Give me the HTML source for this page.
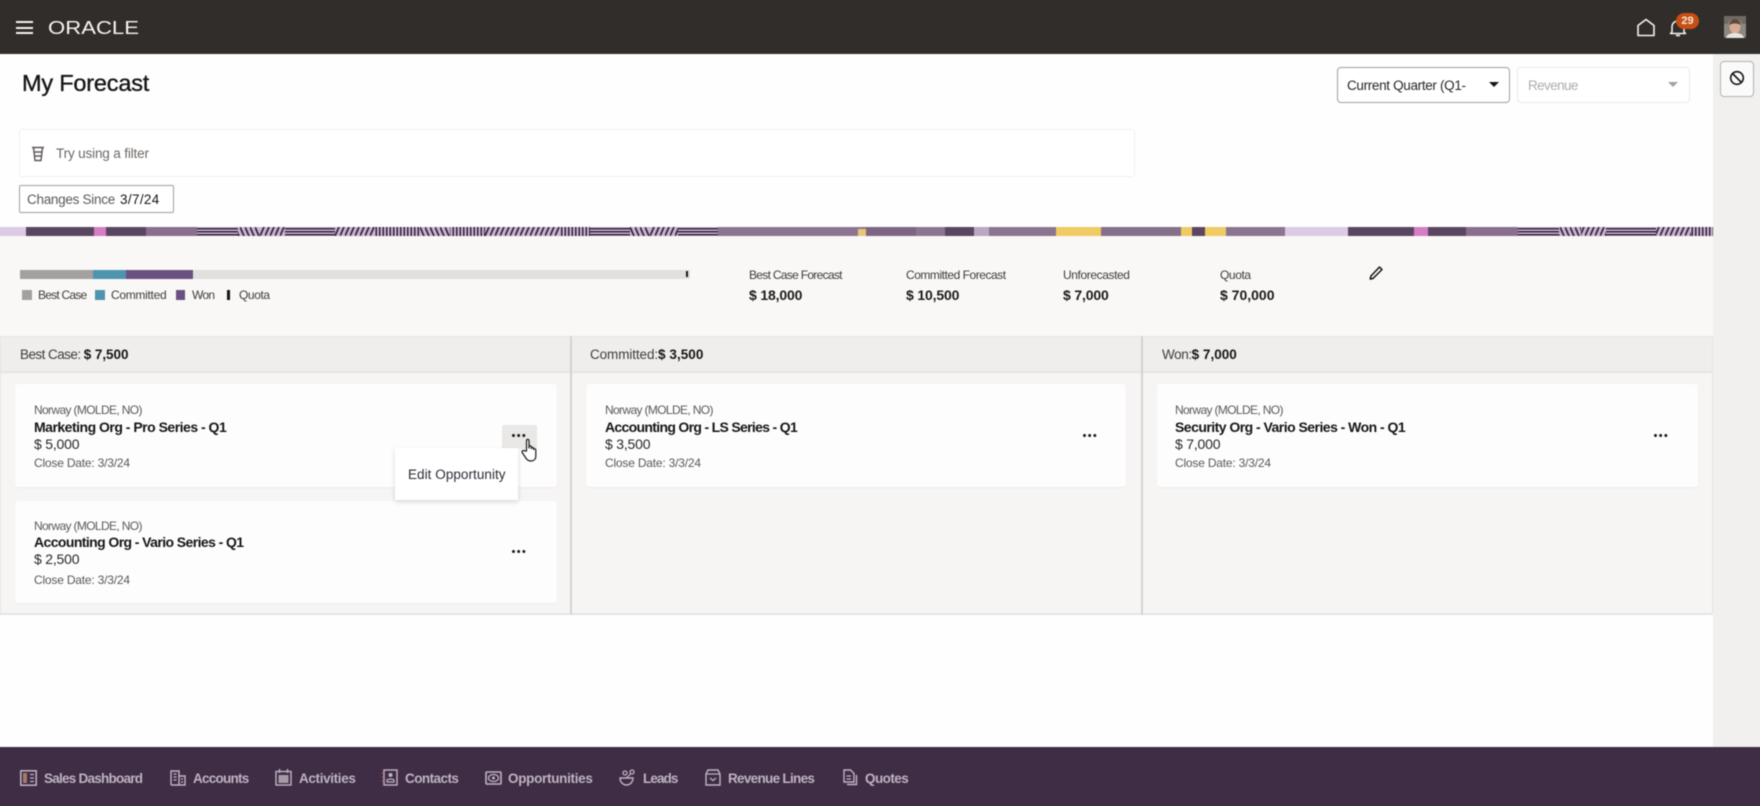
<!DOCTYPE html>
<html lang="en"><head><meta charset="utf-8"><title>My Forecast</title>
<style>
*{box-sizing:border-box}
html,body{margin:0;padding:0;width:1760px;height:806px;overflow:hidden;background:#fefefe}
body{font-family:"Liberation Sans",sans-serif;color:#1c1a19;position:relative}
#root{position:absolute;left:0;top:0;width:1760px;height:806px;overflow:visible;filter:blur(.45px)}
.a{position:absolute}
.t{position:absolute;white-space:nowrap;line-height:20px;height:20px}
.card{position:absolute;background:#fdfdfd;border-radius:3px;box-shadow:0 1px 2px rgba(0,0,0,.04)}
.s{font-size:12px;color:#5c5856;letter-spacing:-.64px}
.c{font-size:12px;color:#5c5856;letter-spacing:-.2px}
.b{font-size:14px;font-weight:bold;color:#161513}
.m{font-size:14px;color:#2a2725;letter-spacing:-.2px}
.l{font-size:12px;color:#3f3c3a;letter-spacing:-.4px}
.v{font-size:14px;font-weight:bold;color:#1c1a19;letter-spacing:-.15px}
.h{font-size:13.5px;color:#3f3c3a;letter-spacing:-.4px}
.h b{color:#161513;letter-spacing:-.1px}
.f{font-size:13.5px;color:#bfb4c3;font-weight:bold}
.dots{position:absolute;width:14px;height:3px;background:radial-gradient(circle at 1.5px 1.5px,#1c1a19 1.4px,transparent 1.6px) 0 0/5.2px 3px repeat-x}
svg{position:absolute;display:block;overflow:visible}
</style></head><body><div id="root">

<!-- page background extended past the edges so the blur does not soften them -->
<div class="a" style="left:-10px;top:-10px;width:1780px;height:826px;background:#fefefe"></div>

<!-- header -->
<div class="a" style="left:-10px;top:-10px;width:1780px;height:64px;background:#312d2a"></div>
<div class="a" style="left:16px;top:21px;width:17px;height:2px;background:#f5f4f2"></div>
<div class="a" style="left:16px;top:27px;width:17px;height:2px;background:#f5f4f2"></div>
<div class="a" style="left:16px;top:32px;width:17px;height:2px;background:#f5f4f2"></div>
<svg style="left:48px;top:20px" width="92" height="16" viewBox="0 0 92 16"><text x="0" y="14" font-family="Liberation Sans" font-size="18" fill="#f7f6f4" textLength="91" lengthAdjust="spacingAndGlyphs">ORACLE</text></svg>
<svg style="left:1636px;top:18px" width="20" height="19" viewBox="0 0 20 19"><path d="M2 17.500V7.500L10 1.500L18 7.500V17.500Z" fill="none" stroke="#f5f4f2" stroke-width="1.600" stroke-linejoin="round"/></svg>
<svg style="left:1669px;top:18px" width="18" height="20" viewBox="0 0 18 20"><path d="M3 14V9C3 5.500 5.500 3 9 3C12.500 3 15 5.500 15 9V14L16.500 15.500H1.500Z" fill="none" stroke="#f5f4f2" stroke-width="1.500" stroke-linejoin="round"/><path d="M7 17.500H11" stroke="#f5f4f2" stroke-width="1.600"/></svg>
<div class="a" style="left:1676px;top:13px;width:23px;height:16px;border-radius:8px;background:#c74e14"></div>
<div class="t" style="left:1676px;top:11px;width:23px;text-align:center;font-size:11px;color:#f7e8dc;font-weight:bold">29</div>
<svg style="left:1724px;top:16px" width="22" height="22" viewBox="0 0 22 22"><rect width="22" height="22" rx="2" fill="#8d8781"/><path d="M0 0H22V8H18C17 4 14 3 11 3C8 3 5 4 4 8H0Z" fill="#6f6a65"/><ellipse cx="11" cy="10.500" rx="5.500" ry="7" fill="#d8ac94"/><path d="M5.500 9C5.500 5 8 3 11 3C14 3 16.500 5 16.500 9C14 7 8 7 5.500 9Z" fill="#5f4a3d"/><path d="M2 22C3 18 7 17 11 17C15 17 19 18 20 22Z" fill="#e8e4de"/></svg>

<!-- page -->
<div class="a" style="left:1713px;top:54px;width:57px;height:693px;background:#f1f0ef"></div>
<div class="t" style="left:22px;top:71px;font-size:23.500px;line-height:24px;height:24px;color:#161513;letter-spacing:-.2px;-webkit-text-stroke:.35px #161513">My Forecast</div>

<div class="a" style="left:1337px;top:67px;width:173px;height:36px;background:#fff;border:1.500px solid #a3a09c;border-radius:4px"></div>
<div class="t" style="left:1347px;top:76px;font-size:13.500px;color:#2a2725;letter-spacing:-.33px">Current Quarter (Q1-</div>
<div class="a" style="left:1489px;top:82px;border:5px solid transparent;border-top:5px solid #161513;border-bottom:0"></div>
<div class="a" style="left:1517px;top:67px;width:173px;height:36px;background:#fff;border:1.500px solid #eceae8;border-radius:4px"></div>
<div class="t" style="left:1528px;top:76px;font-size:13.500px;color:#b1adaa;letter-spacing:-.6px">Revenue</div>
<div class="a" style="left:1668px;top:82px;border:5px solid transparent;border-top:5px solid #a5a19e;border-bottom:0"></div>

<div class="a" style="left:1720px;top:61px;width:34px;height:36px;background:#fafafa;border:1.500px solid #b5b2af;border-radius:4px"></div>
<svg style="left:1729px;top:70px" width="16" height="16" viewBox="0 0 16 16"><circle cx="8" cy="8" r="6.300" fill="none" stroke="#161513" stroke-width="1.600"/><path d="M3.500 3.500L12.500 12.500" stroke="#161513" stroke-width="1.600"/></svg>

<div class="a" style="left:19px;top:129px;width:1116px;height:48px;background:#fff;border:1px solid #f1f0ef;border-radius:3px"></div>
<svg style="left:30px;top:146px" width="16" height="16" viewBox="0 0 16 16"><path d="M2 1.500H14M3.500 1.500L5 14.500H11L12.500 1.500M4 6H12M4.500 10H11.500" fill="none" stroke="#5c5856" stroke-width="1.400"/></svg>
<div class="t" style="left:56px;top:144px;font-size:13.500px;color:#6b6764;letter-spacing:-.15px">Try using a filter</div>

<div class="a" style="left:19px;top:185px;width:155px;height:28px;background:#fff;border:1.500px solid #a3a09c;border-radius:2px"></div>
<div class="t" style="left:27px;top:190px;font-size:13.500px;color:#5c5856;letter-spacing:-.28px">Changes Since</div>
<div class="t" style="left:120px;top:190px;font-size:13.500px;color:#161513;letter-spacing:.35px">3/7/24</div>

<!-- banner -->
<svg style="left:0;top:227px" width="1713" height="9" viewBox="0 0 1713 9" shape-rendering="crispEdges">
<defs>
<pattern id="pd" width="5" height="9" patternUnits="userSpaceOnUse"><rect width="5" height="9" fill="#c9b4d2"/><path d="M0 9L4 0" stroke="#33233e" stroke-width="1.700" shape-rendering="auto"/></pattern>
<pattern id="pb" width="5" height="9" patternUnits="userSpaceOnUse"><rect width="5" height="9" fill="#c9b4d2"/><path d="M0 0L4 9" stroke="#33233e" stroke-width="1.700" shape-rendering="auto"/></pattern>
<pattern id="pv" width="3.500" height="9" patternUnits="userSpaceOnUse"><rect width="3.500" height="9" fill="#c9b4d2"/><rect x="1" width="1.500" height="9" fill="#33233e"/></pattern>
<pattern id="ph" width="8" height="3" patternUnits="userSpaceOnUse"><rect width="8" height="3" fill="#c9b4d2"/><rect y="1" width="8" height="1.300" fill="#33233e"/></pattern>
</defs>
<rect x="-10" width="1723" height="9" fill="#dccbe4"/>
<rect x="26" width="68" height="9" fill="#5b4661"/><rect x="94" width="12" height="9" fill="#d47cc4"/><rect x="106" width="40" height="9" fill="#5b4661"/><rect x="146" width="51" height="9" fill="#8a6e90"/>
<rect x="197" width="41" height="9" fill="url(#ph)"/><rect x="238" width="22" height="9" fill="url(#pb)"/><rect x="260" width="25" height="9" fill="url(#pd)"/><rect x="285" width="50" height="9" fill="url(#ph)"/><rect x="335" width="40" height="9" fill="url(#pd)"/><rect x="375" width="45" height="9" fill="url(#pv)"/><rect x="420" width="30" height="9" fill="url(#pb)"/><rect x="450" width="35" height="9" fill="url(#pv)"/><rect x="485" width="75" height="9" fill="url(#pd)"/><rect x="560" width="30" height="9" fill="url(#pv)"/><rect x="590" width="40" height="9" fill="url(#ph)"/><rect x="630" width="20" height="9" fill="url(#pb)"/><rect x="650" width="28" height="9" fill="url(#pd)"/><rect x="678" width="40" height="9" fill="url(#ph)"/>
<rect x="718" width="227" height="9" fill="#8b7591"/><rect x="858" y="2" width="8" height="7" fill="#e8c777"/><rect x="866" width="50" height="9" fill="#7e6585"/><rect x="945" width="29" height="9" fill="#5b4661"/><rect x="974" width="15" height="9" fill="#bba6c4"/><rect x="989" width="67" height="9" fill="#8b7591"/><rect x="1056" width="45" height="9" fill="#f0ca63"/><rect x="1101" width="80" height="9" fill="#85708c"/><rect x="1181" width="11" height="9" fill="#f0ca63"/><rect x="1192" width="13" height="9" fill="#5b4661"/><rect x="1205" width="21" height="9" fill="#f0ca63"/><rect x="1226" width="59" height="9" fill="#8b7591"/><rect x="1285" width="63" height="9" fill="#dccbe4"/><rect x="1348" width="66" height="9" fill="#5b4661"/><rect x="1414" width="14" height="9" fill="#d47cc4"/><rect x="1428" width="38" height="9" fill="#5b4661"/><rect x="1466" width="52" height="9" fill="#8a6e90"/>
<rect x="1518" width="41" height="9" fill="url(#ph)"/><rect x="1559" width="22" height="9" fill="url(#pb)"/><rect x="1581" width="25" height="9" fill="url(#pd)"/><rect x="1606" width="50" height="9" fill="url(#ph)"/><rect x="1656" width="35" height="9" fill="url(#pd)"/><rect x="1691" width="22" height="9" fill="url(#pv)"/>
</svg>

<!-- summary -->
<div class="a" style="left:-10px;top:236px;width:1723px;height:100px;background:#f9f8f6"></div>
<div class="a" style="left:20px;top:270px;width:670px;height:9px;background:#e1e0de;border-radius:1px"></div>
<div class="a" style="left:20px;top:270px;width:73px;height:9px;background:#a3a09d"></div>
<div class="a" style="left:93px;top:270px;width:33px;height:9px;background:#4f94ae"></div>
<div class="a" style="left:126px;top:270px;width:67px;height:9px;background:#6b5180"></div>
<div class="a" style="left:686px;top:271px;width:2px;height:6px;background:#161513"></div>
<div class="a" style="left:22px;top:290px;width:10px;height:10px;background:#a3a09d"></div>
<div class="t l" style="left:38px;top:285px;letter-spacing:-.78px">Best Case</div>
<div class="a" style="left:95px;top:290px;width:10px;height:10px;background:#4f94ae"></div>
<div class="t l" style="left:111px;top:285px;letter-spacing:-.3px">Committed</div>
<div class="a" style="left:176px;top:290px;width:9px;height:10px;background:#6b5180"></div>
<div class="t l" style="left:192px;top:285px;letter-spacing:-.7px">Won</div>
<div class="a" style="left:227px;top:290px;width:3px;height:10px;background:#161513"></div>
<div class="t l" style="left:239px;top:285px">Quota</div>

<div class="t l" style="left:749px;top:265px;letter-spacing:-.7px">Best Case Forecast</div><div class="t v" style="left:749px;top:285px">$ 18,000</div>
<div class="t l" style="left:906px;top:265px;letter-spacing:-.47px">Committed Forecast</div><div class="t v" style="left:906px;top:285px">$ 10,500</div>
<div class="t l" style="left:1063px;top:265px">Unforecasted</div><div class="t v" style="left:1063px;top:285px">$ 7,000</div>
<div class="t l" style="left:1220px;top:265px">Quota</div><div class="t v" style="left:1220px;top:285px;letter-spacing:0">$ 70,000</div>
<svg style="left:1368px;top:265px" width="16" height="16" viewBox="0 0 16 16"><path d="M3 11L11.500 2L14 4.500L5 13.500L2.200 14Z" fill="none" stroke="#161513" stroke-width="1.500" stroke-linejoin="round"/></svg>

<!-- board -->
<div class="a" style="left:-10px;top:336px;width:1723px;height:279px;background:#f6f5f4;border:1px solid #e6e5e3;border-width:1px 1px 2px 1px"></div>
<div class="a" style="left:-10px;top:336px;width:1723px;height:37px;background:#efeeec;border:1px solid #e6e5e3;border-width:1px 1px 2px 1px"></div>
<div class="a" style="left:0;top:337px;width:1px;height:277px;background:#e6e5e3"></div>
<div class="a" style="left:570px;top:336px;width:2px;height:279px;background:#d5d3d1"></div>
<div class="a" style="left:1141px;top:336px;width:2px;height:279px;background:#d5d3d1"></div>
<div class="t h" style="left:20px;top:345px;letter-spacing:-.55px">Best Case: <b style="letter-spacing:-.05px">$ 7,500</b></div>
<div class="t h" style="left:590px;top:345px;letter-spacing:-.1px">Committed:<b style="letter-spacing:.05px">$ 3,500</b></div>
<div class="t h" style="left:1162px;top:345px">Won:<b style="letter-spacing:0">$ 7,000</b></div>

<div class="card" style="left:15px;top:384px;width:542px;height:103px"></div>
<div class="t s" style="left:34px;top:400px">Norway (MOLDE, NO)</div>
<div class="t b" style="left:34px;top:417px;letter-spacing:-.5px">Marketing Org - Pro Series - Q1</div>
<div class="t m" style="left:34px;top:434px">$ 5,000</div>
<div class="t c" style="left:34px;top:453px">Close Date: 3/3/24</div>
<div class="a" style="left:502px;top:425px;width:35px;height:24px;background:#e9e8e6;border-radius:2px"></div>
<div class="dots" style="left:512px;top:434px"></div>

<div class="card" style="left:15px;top:501px;width:542px;height:102px"></div>
<div class="t s" style="left:34px;top:516px">Norway (MOLDE, NO)</div>
<div class="t b" style="left:34px;top:532px;letter-spacing:-.59px">Accounting Org - Vario Series - Q1</div>
<div class="t m" style="left:34px;top:549px">$ 2,500</div>
<div class="t c" style="left:34px;top:570px">Close Date: 3/3/24</div>
<div class="dots" style="left:512px;top:550px"></div>

<div class="a" style="left:395px;top:448px;width:123px;height:52px;background:#fff;box-shadow:0 2px 5px rgba(0,0,0,.14)"></div>
<div class="t" style="left:408px;top:465px;font-size:13.500px;color:#2a2d35;letter-spacing:.05px">Edit Opportunity</div>
<svg style="left:521px;top:438px" width="16" height="24" viewBox="0 0 16 24"><path d="M5.500 13V3C5.500 .8 8 .8 8 3V10V9C8 7.500 10.300 7.500 10.300 9V10.500C10.300 9.200 12.500 9.200 12.500 10.500V11.500C12.500 10.500 14.800 10.500 14.800 12V18C14.800 21 13 23 10 23C7 23 5.800 21.500 4.500 19.500L1.200 14.500C.5 13 2.500 11.500 3.800 13Z" fill="#fff" stroke="#1c1a19" stroke-width="1.200" stroke-linejoin="round"/></svg>

<div class="card" style="left:586px;top:384px;width:540px;height:103px"></div>
<div class="t s" style="left:605px;top:400px">Norway (MOLDE, NO)</div>
<div class="t b" style="left:605px;top:417px;letter-spacing:-.68px">Accounting Org - LS Series - Q1</div>
<div class="t m" style="left:605px;top:434px">$ 3,500</div>
<div class="t c" style="left:605px;top:453px">Close Date: 3/3/24</div>
<div class="dots" style="left:1083px;top:434px"></div>

<div class="card" style="left:1157px;top:384px;width:541px;height:103px"></div>
<div class="t s" style="left:1175px;top:400px">Norway (MOLDE, NO)</div>
<div class="t b" style="left:1175px;top:417px;letter-spacing:-.53px">Security Org - Vario Series - Won - Q1</div>
<div class="t m" style="left:1175px;top:434px">$ 7,000</div>
<div class="t c" style="left:1175px;top:453px">Close Date: 3/3/24</div>
<div class="dots" style="left:1654px;top:434px"></div>

<!-- footer -->
<div class="a" style="left:-10px;top:747px;width:1780px;height:69px;background:#3e2d45"></div>
<svg style="left:20px;top:770px" width="17" height="16" viewBox="0 0 17 16"><rect x=".8" y=".8" width="15.400" height="14.400" fill="none" stroke="#bfb4c3" stroke-width="1.500"/><rect x="3" y="3" width="4" height="10" fill="#a9786a"/><path d="M10 4.500H14M10 8H14M10 11.500H14" stroke="#bfb4c3" stroke-width="1.300"/></svg>
<div class="t f" style="left:44px;top:769px;letter-spacing:-.75px">Sales Dashboard</div>
<svg style="left:170px;top:770px" width="16" height="16" viewBox="0 0 16 16"><path d="M1 15V1H9V15M9 6H15V15H1" fill="none" stroke="#bfb4c3" stroke-width="1.400"/><path d="M3.500 4H6.500M3.500 7H6.500M3.500 10H6.500M11 9H13M11 12H13" stroke="#bfb4c3" stroke-width="1.300"/></svg>
<div class="t f" style="left:193px;top:769px;letter-spacing:-.75px">Accounts</div>
<svg style="left:275px;top:769px" width="17" height="17" viewBox="0 0 17 17"><rect x="1" y="2.500" width="15" height="13.500" fill="none" stroke="#bfb4c3" stroke-width="1.400"/><path d="M4.500 0V4M12.500 0V4" stroke="#bfb4c3" stroke-width="1.400"/><rect x="3.500" y="6" width="10" height="8" fill="#a59aa8"/></svg>
<div class="t f" style="left:299px;top:769px;letter-spacing:-.35px">Activities</div>
<svg style="left:382px;top:769px" width="16" height="17" viewBox="0 0 16 17"><rect x="2" y="1" width="13" height="15" fill="none" stroke="#bfb4c3" stroke-width="1.400"/><circle cx="8.500" cy="6" r="2" fill="#bfb4c3"/><path d="M5 13V11C5 9.800 12 9.800 12 11V13Z" fill="none" stroke="#bfb4c3" stroke-width="1.200"/><path d="M0 4H3M0 8H3M0 12H3" stroke="#b0707a" stroke-width="1.200"/></svg>
<div class="t f" style="left:405px;top:769px;letter-spacing:-.55px">Contacts</div>
<svg style="left:485px;top:771px" width="17" height="14" viewBox="0 0 17 14"><rect x="1" y="1" width="15" height="12" rx="1" fill="none" stroke="#bfb4c3" stroke-width="1.600"/><ellipse cx="8.500" cy="7" rx="5" ry="3.500" fill="none" stroke="#bfb4c3" stroke-width="1.300"/><circle cx="8.500" cy="7" r="1.500" fill="#bfb4c3"/></svg>
<div class="t f" style="left:508px;top:769px;letter-spacing:-.3px">Opportunities</div>
<svg style="left:619px;top:769px" width="17" height="17" viewBox="0 0 17 17"><path d="M1 9H14C14 13 11 16 7.500 16C4 16 1 13 1 9Z" fill="none" stroke="#bfb4c3" stroke-width="1.400"/><circle cx="6" cy="4" r="2" fill="none" stroke="#bfb4c3" stroke-width="1.300"/><circle cx="13" cy="3" r="2" fill="none" stroke="#bfb4c3" stroke-width="1.300"/><path d="M7.500 9L11.500 5" stroke="#bfb4c3" stroke-width="1.200"/></svg>
<div class="t f" style="left:643px;top:769px;letter-spacing:-.9px">Leads</div>
<svg style="left:705px;top:769px" width="16" height="17" viewBox="0 0 16 17"><path d="M3 1H13L15 5V16H1V5Z" fill="none" stroke="#bfb4c3" stroke-width="1.400"/><path d="M1 5H15" stroke="#bfb4c3" stroke-width="1.200"/><path d="M5 9L8 11.500L11 9" fill="none" stroke="#bfb4c3" stroke-width="1.300"/></svg>
<div class="t f" style="left:728px;top:769px;letter-spacing:-.7px">Revenue Lines</div>
<svg style="left:843px;top:769px" width="15" height="17" viewBox="0 0 15 17"><path d="M1 1H7.500L11 4.500V13H1Z" fill="none" stroke="#bfb4c3" stroke-width="1.400"/><path d="M13.500 6V15.500H4" fill="none" stroke="#bfb4c3" stroke-width="1.400"/><path d="M3.500 7H8M3.500 10H8" stroke="#bfb4c3" stroke-width="1.200"/></svg>
<div class="t f" style="left:865px;top:769px;letter-spacing:-.55px">Quotes</div>

</div></body></html>
